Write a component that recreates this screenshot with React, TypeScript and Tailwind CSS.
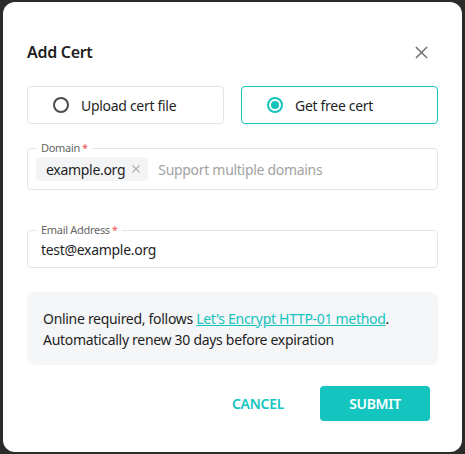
import React, { useState } from 'react'

const teal = '#13c4bf'

function Radio({ checked }: { checked: boolean }) {
  return (
    <span
      className={`flex h-[16px] w-[16px] items-center justify-center rounded-full border-2 ${
        checked ? 'border-[#13c4bf]' : 'border-[#4b4b4b]'
      }`}
    >
      {checked && <span className="h-[8px] w-[8px] rounded-full bg-[#13c4bf]" />}
    </span>
  )
}

function Field({ label, children }: { label: string; children: React.ReactNode }) {
  return (
    <div className="relative rounded-[4px] border border-[#e2e6ea]">
      <span className="absolute -top-[9px] left-[9px] bg-white px-[4px] text-[11px] leading-[16px] text-[#666]">
        {label}
        <span className="ml-[2px] text-[#f05252]">*</span>
      </span>
      {children}
    </div>
  )
}

export default function App() {
  const [mode, setMode] = useState<'upload' | 'free'>('free')

  return (
    <div className="h-[454px] w-[465px] bg-[#2b2b2b] pl-[3px] pt-[2px] font-['Noto_Sans',sans-serif] tracking-[-0.3px]">
      <div className="flex h-[450px] w-[459px] flex-col rounded-[12px] bg-white px-[24px] text-[#1f1f1f]">
        <div className="mt-[36px] flex h-[28px] items-center justify-between">
          <h2 className="text-[16px] font-semibold leading-[22px]">Add Cert</h2>
          <button className="mr-[10px] text-[#6b6b6b]">
            <svg width="13" height="13" viewBox="0 0 14 14" stroke="currentColor" strokeWidth="1.5">
              <path d="M1 1L13 13M13 1L1 13" />
            </svg>
          </button>
        </div>

        <div className="mt-[20px] grid grid-cols-2 gap-[17px]">
          <button
            onClick={() => setMode('upload')}
            className={`flex h-[38px] items-center gap-[12px] rounded-[4px] border pl-[25px] text-[14px] ${
              mode === 'upload' ? 'border-[#13c4bf]' : 'border-[#e2e6ea]'
            }`}
          >
            <Radio checked={mode === 'upload'} />
            Upload cert file
          </button>
          <button
            onClick={() => setMode('free')}
            className={`flex h-[38px] items-center gap-[12px] rounded-[4px] border pl-[25px] text-[14px] ${
              mode === 'free' ? 'border-[#13c4bf]' : 'border-[#e2e6ea]'
            }`}
          >
            <Radio checked={mode === 'free'} />
            Get free cert
          </button>
        </div>

        <div className="mt-[24px]">
          <Field label="Domain">
            <div className="flex h-[40px] items-center gap-[10px] px-[8px]">
              <span className="flex h-[24px] items-center gap-[7px] rounded-[4px] bg-[#f3f4f6] pl-[10px] pr-[8px] text-[14px]">
                example.org
                <svg width="8" height="8" viewBox="0 0 8 8" stroke="#b0b0b0" strokeWidth="1.1">
                  <path d="M0.5 0.5L7.5 7.5M7.5 0.5L0.5 7.5" />
                </svg>
              </span>
              <span className="text-[14px] text-[#a3a3a3]">Support multiple domains</span>
            </div>
          </Field>
        </div>

        <div className="mt-[40px]">
          <Field label="Email Address">
            <div className="flex h-[36px] items-center px-[13px] text-[14px]">test@example.org</div>
          </Field>
        </div>

        <div className="mt-[24px] rounded-[8px] bg-[#f5f6f8] px-[16px] py-[15.5px] text-[14px] leading-[21px]">
          <p>
            Online required, follows{' '}
            <a href="#" className="underline" style={{ color: teal }}>
              Let's Encrypt HTTP-01 method
            </a>
            .
          </p>
          <p>Automatically renew 30 days before expiration</p>
        </div>

        <div className="mt-[21px] flex items-center justify-end gap-[36px] pr-[8px]">
          <button className="text-[14px] font-semibold text-[#13c4bf]">CANCEL</button>
          <button className="h-[35px] w-[110px] rounded-[4px] bg-[#13c4bf] text-[14px] font-semibold text-white">
            SUBMIT
          </button>
        </div>
      </div>
    </div>
  )
}
